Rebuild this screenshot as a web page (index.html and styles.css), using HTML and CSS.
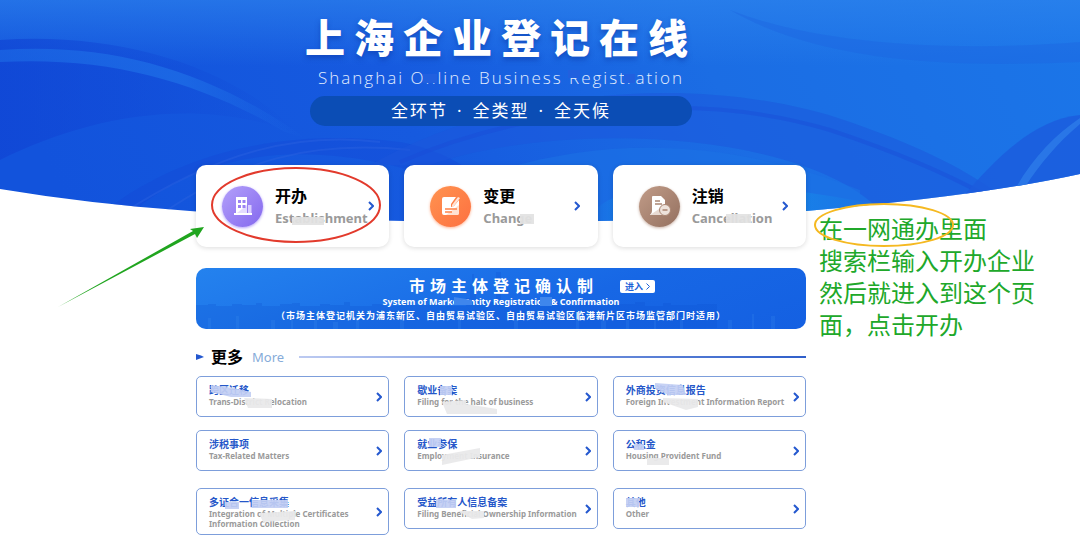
FILE: index.html
```html
<!DOCTYPE html>
<html lang="zh-CN">
<head>
    <meta charset="UTF-8">
    <meta name="viewport" content="width=device-width, initial-scale=1.0">
    <title>上海企业登记在线</title>
    <link rel="stylesheet" href="styles.css">
</head>
<body>
    <svg class="hero-bg" viewBox="0 0 1080 221" preserveAspectRatio="none" aria-hidden="true">
        <defs>
            <linearGradient id="sky" x1="0" y1="0.3" x2="1" y2="0.2">
                <stop offset="0" stop-color="#1253dc"/>
                <stop offset="0.35" stop-color="#165adf"/>
                <stop offset="0.65" stop-color="#1b6de4"/>
                <stop offset="1" stop-color="#1b75e8"/>
            </linearGradient>
            <linearGradient id="top" x1="0" y1="0" x2="0" y2="1">
                <stop offset="0" stop-color="#2f86ee" stop-opacity="0.6"/>
                <stop offset="0.3" stop-color="#2f86ee" stop-opacity="0"/>
            </linearGradient>
            <linearGradient id="dark" x1="0" y1="0" x2="1" y2="0">
                <stop offset="0" stop-color="#1044d4" stop-opacity="0.7"/>
                <stop offset="1" stop-color="#1044d4" stop-opacity="0"/>
            </linearGradient>
            <linearGradient id="band" x1="0" y1="0" x2="1" y2="0">
                <stop offset="0" stop-color="#1d6ce6" stop-opacity="0.6"/>
                <stop offset="0.6" stop-color="#1d6ce6" stop-opacity="0.8"/>
                <stop offset="1" stop-color="#1d6ce6" stop-opacity="0"/>
            </linearGradient>
            <linearGradient id="cyan" x1="0" y1="0" x2="1" y2="0">
                <stop offset="0" stop-color="#12a0ee" stop-opacity="0"/>
                <stop offset="0.3" stop-color="#12a0ee" stop-opacity="0.8"/>
                <stop offset="1" stop-color="#12a0ee" stop-opacity="0"/>
            </linearGradient>
            <clipPath id="wave">
                <path d="M0 0H1080V174Q980 196 806 211Q700 220 598 221H405Q300 220 190 211Q90 204 0 189Z"/>
            </clipPath>
        </defs>
        <g clip-path="url(#wave)">
            <rect width="1080" height="221" fill="url(#sky)"/>
            <rect width="1080" height="221" fill="url(#top)"/>
            <path d="M0 40C110 32 230 62 300 135C200 95 90 115 0 160Z" fill="url(#dark)"/>
            <path d="M0 50C110 42 210 70 305 138L285 132C200 82 110 56 0 62Z" fill="url(#band)"/>
            <path d="M100 215C180 150 290 128 400 142C440 150 470 165 490 190L390 165C280 140 190 160 130 215Z" fill="#1549d6" opacity="0.4"/>
            <path d="M120 215C220 150 300 132 380 142M160 215C240 160 310 140 410 150" fill="none" stroke="#2e63e2" stroke-width="2" opacity="0.4"/>
            <path d="M370 165C500 90 700 70 850 122C910 143 960 165 1000 195L880 210C800 130 560 120 430 165Z" fill="#1b55dc" opacity="0.5"/>
            <path d="M400 162C520 110 690 88 830 130C890 150 940 170 985 195" fill="none" stroke="#1a4cd8" stroke-width="4" opacity="0.4"/>
            <path d="M500 170C600 140 720 135 860 190L860 221H590Z" fill="#1c74e6" opacity="0.5"/>
            <path d="M590 221C595 190 680 165 880 205L800 221Z" fill="url(#cyan)"/>
            <path d="M730 10C820 45 950 52 1080 42V62C950 68 820 62 730 10Z" fill="#1c62e0" opacity="0.35"/>
            <path d="M960 200C990 165 1030 120 1080 115V190Z" fill="#1c5bdd" opacity="0.8"/>
            <path d="M1012 195C1030 160 1055 135 1080 118V124C1055 145 1035 170 1020 195Z" fill="#2f80ea" opacity="0.7"/>
        </g>
    </svg>

    <div class="page">
        <main>
            <header class="hero">
                <h1>上海企业登记在线</h1>
                <p class="hero-en">Shanghai Online Business Registration</p>
                <p class="hero-tags"><span>全环节</span><span>·</span><span>全类型</span><span>·</span><span>全天候</span></p>
            </header>

            <nav class="cards">
                <a class="card" href="#establishment">
                    <span class="badge purple">
                        <svg width="26" height="26" viewBox="0 0 26 26">
                            <path d="M6 4h11v16H6z" fill="#fff"/>
                            <path d="M18 12h3.500v8H18z" fill="#d9cdff"/>
                            <path d="M4 20h18v2H4z" fill="#fff"/>
                            <path d="M17 12v8H7z" fill="#d9cdff" opacity="0.7"/>
                            <path d="M8 7h3v3H8zM12.500 7h3v3h-3zM8 12h3v3H8zM12.500 12h3v3h-3z" fill="#9b82f3"/>
                        </svg>
                    </span>
                    <span class="card-text"><strong>开办</strong><span>Establishment</span></span>
                    <svg class="chevron" width="6" height="10" viewBox="0 0 6 10"><path d="M1 1l4 4-4 4"/></svg>
                </a>
                <a class="card" href="#change">
                    <span class="badge orange">
                        <svg width="26" height="26" viewBox="0 0 26 26">
                            <path d="M6 4h12l-5 7v3l3-1 5-6v13q0 2-2 2H6q-2 0-2-2V6q0-2 2-2z" fill="#fff"/>
                            <path d="M21 12v8q0 2-2 2H8z" fill="#ffd9c6" opacity="0.8"/>
                            <path d="M14 12l6-8 2 1-6 8-2 1z" fill="#ffe3d5"/>
                            <path d="M7 16h12M7 19h7" stroke="#ff8248" stroke-width="1.400"/>
                        </svg>
                    </span>
                    <span class="card-text"><strong>变更</strong><span>Change</span></span>
                    <svg class="chevron" width="6" height="10" viewBox="0 0 6 10"><path d="M1 1l4 4-4 4"/></svg>
                </a>
                <a class="card" href="#cancellation">
                    <span class="badge brown">
                        <svg width="26" height="26" viewBox="0 0 26 26">
                            <path d="M7 3h8l4 4v13q0 2-2 2H4q2-2 2-4V4q0-1 1-1z" fill="#fff"/>
                            <path d="M4 22l9-6 2 6z" fill="#e8dad2"/>
                            <path d="M9 8h5M9 11h7" stroke="#ab8673" stroke-width="1.300"/>
                            <circle cx="19" cy="17" r="5.500" fill="#eee3dc" stroke="#ab8673"/>
                            <path d="M16.500 17h5" stroke="#ab8673" stroke-width="1.500"/>
                        </svg>
                    </span>
                    <span class="card-text"><strong>注销</strong><span>Cancellation</span></span>
                    <svg class="chevron" width="6" height="10" viewBox="0 0 6 10"><path d="M1 1l4 4-4 4"/></svg>
                </a>
            </nav>

            <section class="banner">
                <svg class="skyline" viewBox="0 0 610 61" preserveAspectRatio="none" aria-hidden="true">
                    <path d="M0 61V37h12v-1h8v2h16v-2h10v1h14v-2h6v3h18v-2h12v-1h8v3h20v-2h10v1h14v-3h6v4h22v-2h12v2h16v-3h8v2h20v-1h14v2h24v-8h4v-14h2V6h2v12h2v16h20V4h5v32h18v-2h8v3h24v-2h8v3h20v-3h12v3h16v-4h8v2h20v-2h10v4h18v-3h8v2h26v-1h20v24z" fill="#0d50cf" opacity="0.25"/>
                    <path d="M12 61V50h3v11M40 61V48h3v13M75 61V52h4v9M95 61V45h2v16M118 61V50h3v11M137 61V54h5v7M160 61V46h3v15M204 61V52h4v9M262 61V50h3v11M318 61V52h4v9M380 61V48h3v13M405 61V53h5v8M430 61V52h3v9M458 61V47h2v14M484 61V49h3v12M532 61V52h4v9M556 61V46h2v15M575 61V48h4v13" fill="#4c9af5" opacity="0.16"/>
                </svg>
                <div class="banner-title">
                    <h2>市场主体登记确认制</h2>
                    <button type="button">进入<svg width="4" height="7" viewBox="0 0 4 7"><path d="M0.500 0.500l3 3-3 3"/></svg></button>
                </div>
                <p class="banner-en">System of Market Entity Registration &amp; Confirmation</p>
                <p class="banner-note">（市场主体登记机关为浦东新区、自由贸易试验区、自由贸易试验区临港新片区市场监管部门时适用）</p>
            </section>

            <div class="more">
                <svg width="8" height="6" viewBox="0 0 8 6"><path d="M0 0l5 1.500L8 3 0 6z"/></svg>
                <h2>更多</h2>
                <span>More</span>
                <i></i>
            </div>

            <nav class="links">
                <a href="#"><span><strong>跨区迁移</strong><small>Trans-District Relocation</small></span><svg class="chevron" width="6" height="10" viewBox="0 0 6 10"><path d="M1 1l4 4-4 4"/></svg></a>
                <a href="#"><span><strong>歇业备案</strong><small>Filing for the halt of business</small></span><svg class="chevron" width="6" height="10" viewBox="0 0 6 10"><path d="M1 1l4 4-4 4"/></svg></a>
                <a href="#"><span><strong>外商投资信息报告</strong><small>Foreign Investment Information Report</small></span><svg class="chevron" width="6" height="10" viewBox="0 0 6 10"><path d="M1 1l4 4-4 4"/></svg></a>
                <a href="#"><span><strong>涉税事项</strong><small>Tax-Related Matters</small></span><svg class="chevron" width="6" height="10" viewBox="0 0 6 10"><path d="M1 1l4 4-4 4"/></svg></a>
                <a href="#"><span><strong>就业参保</strong><small>Employment Insurance</small></span><svg class="chevron" width="6" height="10" viewBox="0 0 6 10"><path d="M1 1l4 4-4 4"/></svg></a>
                <a href="#"><span><strong>公积金</strong><small>Housing Provident Fund</small></span><svg class="chevron" width="6" height="10" viewBox="0 0 6 10"><path d="M1 1l4 4-4 4"/></svg></a>
                <a href="#"><span><strong>多证合一信息采集</strong><small>Integration of Multiple Certificates<br>Information Collection</small></span><svg class="chevron" width="6" height="10" viewBox="0 0 6 10"><path d="M1 1l4 4-4 4"/></svg></a>
                <a href="#"><span><strong>受益所有人信息备案</strong><small>Filing Beneficial Ownership Information</small></span><svg class="chevron" width="6" height="10" viewBox="0 0 6 10"><path d="M1 1l4 4-4 4"/></svg></a>
                <a href="#"><span><strong>其他</strong><small>Other</small></span><svg class="chevron" width="6" height="10" viewBox="0 0 6 10"><path d="M1 1l4 4-4 4"/></svg></a>
            </nav>
        </main>

        <aside class="tip">在一网通办里面<br>搜索栏输入开办企业然后就进入到这个页面，点击开办</aside>
    </div>

    <!-- hand drawn marks and smudges on top of the page -->
    <svg class="marks" viewBox="0 0 1080 550" preserveAspectRatio="none" aria-hidden="true">
        <g fill="#2160df">
            <path d="M423 74h14v9h-14zM568 70h12v8h-12zM624 74h11v9h-11z"/>
        </g>
        <path d="M454 297l18 3v5h-18zM540 297h12v9h-12z" fill="#3f86ec"/>
        <g fill="#e2e2e2" opacity="0.94">
            <path d="M292 217h32v8h-32zM520 214h14v10h-14zM726 214h25v9h-25z"/>
        </g>
        <g fill="#c3cff4" opacity="0.92">
            <path d="M211 385l22 3 18 4v5h-20l-20-5zM440 386h12v9h-12zM655 383l28 2 3 10h-18l-13-7zM429 438h12v9h-12zM634 444h10v6h-10z"/>
            <path d="M225 502h14v7h-14zM252 500h36v8h-36zM436 499l20 1v8h-20zM626 498h13v9h-13z"/>
        </g>
        <g fill="#e9e9ea" opacity="0.95">
            <path d="M244 398l28 1v9h-24zM442 402l24-2v4l31 5v5h-50zM663 398l35 1v8l-12 3-23-8zM442 455l38-7v9l-38 8zM647 458h22v7h-22z"/>
            <path d="M259 513l36-2v9l-32 2zM458 511h26v7l-12 1z"/>
        </g>
        <ellipse cx="296" cy="205" rx="84" ry="37" fill="none" stroke="#e23a2c" stroke-width="2"/>
        <ellipse cx="884" cy="225" rx="69" ry="21" fill="none" stroke="#f5b921" stroke-width="2"/>
        <path d="M58 307L193 231l-3-2 14-2-7 11-2-4z" fill="#20a51f"/>
    </svg>
</body>
</html>
```
FILE: styles.css
```css
* {
    box-sizing: border-box;
}

body {
    font-family: "Noto Sans", "Noto Sans CJK SC", sans-serif;
    background-color: #fff;
    margin: 0;
    position: relative;
}

h1, h2, p {
    margin: 0;
}

a {
    color: inherit;
    text-decoration: none;
}

.hero-bg {
    position: absolute;
    top: 0;
    left: 0;
    width: 100%;
    height: 221px;
}

.page {
    position: relative;
    display: grid;
    grid-template-columns: 196fr 610fr 274fr;
}

main {
    grid-column: 2;
    min-width: 0;
}

.hero {
    display: flex;
    flex-direction: column;
    align-items: center;
    padding-top: 10px;
    color: #fff;
    white-space: nowrap;
}

h1 {
    font-size: 40px;
    line-height: 56px;
    font-weight: 900;
    letter-spacing: 9px;
    text-shadow: 0 3px 5px rgba(10, 50, 160, 0.5);
}

.hero-en {
    font-family: "Open Sans", sans-serif;
    font-size: 17px;
    line-height: 24px;
    font-weight: 300;
    letter-spacing: 2px;
    color: #e2edfe;
}

.hero-tags {
    display: flex;
    justify-content: center;
    gap: 9px;
    width: 382px;
    margin-top: 6px;
    border-radius: 15px;
    background-color: #0b4db5;
    font-size: 17px;
    line-height: 30px;
    letter-spacing: 2px;
}

.cards {
    display: grid;
    grid-template-columns: repeat(3, 1fr);
    gap: 15px;
    margin-top: 39px;
}

.card {
    display: flex;
    align-items: center;
    gap: 12px;
    min-width: 0;
    height: 82px;
    padding: 0 18px 0 26px;
    border-radius: 10px;
    background-color: #fff;
    box-shadow: 0 1px 5px rgba(0, 0, 0, 0.14);
}

.badge {
    display: flex;
    align-items: center;
    justify-content: center;
    flex: none;
    width: 41px;
    height: 41px;
    border-radius: 50%;
}

.purple {
    background: linear-gradient(135deg, #b3a0fa, #8468ee);
    box-shadow: 0 1px 3px #b3a0fa;
}

.orange {
    background: linear-gradient(135deg, #ff9350, #fd7040);
    box-shadow: 0 1px 3px #ffb595;
}

.brown {
    background: linear-gradient(135deg, #c19c88, #94705f);
    box-shadow: 0 1px 3px #ccb4a8;
}

.card-text {
    flex: 1 0 auto;
    display: flex;
    flex-direction: column;
    padding-top: 2px;
    line-height: 22px;
}

.card-text strong {
    color: #000;
    font-size: 16px;
}

.card-text span {
    color: #9a9a9a;
    font-size: 13px;
    font-weight: 700;
}

.chevron {
    flex: none;
    fill: none;
    stroke: #2458cf;
    stroke-width: 2;
}

.card .chevron {
    margin-left: -12px;
}

.banner {
    position: relative;
    margin-top: 21px;
    padding: 9px 0 5px;
    border-radius: 10px;
    overflow: hidden;
    background: linear-gradient(160deg, #2482ee, #1767e5 60%, #1460e2);
    color: #fff;
    text-align: center;
    white-space: nowrap;
}

.skyline {
    position: absolute;
    top: 0;
    left: 0;
    width: 100%;
    height: 100%;
}

.banner-title, .banner-en, .banner-note {
    position: relative;
}

.banner-title {
    display: flex;
    align-items: center;
    justify-content: center;
    gap: 22px;
    padding-left: 62px;
}

.banner-title h2 {
    font-size: 16px;
    line-height: 19px;
    letter-spacing: 5px;
}

.banner button {
    display: flex;
    align-items: center;
    gap: 3px;
    height: 13px;
    padding: 0 5px;
    border: none;
    border-radius: 2px;
    background-color: #fff;
    color: #1d63d8;
    font-family: inherit;
    font-size: 9px;
    font-weight: 700;
    line-height: 13px;
}

.banner button svg {
    fill: none;
    stroke: #1d63d8;
}

.banner-en {
    font-size: 9px;
    line-height: 12px;
    font-weight: 700;
}

.banner-note {
    font-size: 9px;
    line-height: 16px;
    font-weight: 700;
    letter-spacing: 1px;
}

.more {
    display: flex;
    align-items: center;
    margin-top: 16px;
    line-height: 24px;
}

.more svg {
    fill: #2458cf;
}

.more h2 {
    margin: 0 9px 0 7px;
    font-size: 16px;
    color: #000;
}

.more span {
    color: #86abd9;
    font-size: 13px;
}

.more i {
    flex: 1;
    height: 2px;
    margin-left: 15px;
    background: linear-gradient(90deg, #bccaf1, #2f5fca);
}

.links {
    display: grid;
    grid-template-columns: repeat(3, 1fr);
    grid-template-rows: 42px 46px auto;
    gap: 12px 15px;
    align-items: start;
    margin-top: 7px;
}

.links a {
    display: flex;
    align-items: center;
    justify-content: space-between;
    min-width: 0;
    min-height: 41px;
    padding: 6px 6px 5px 12px;
    border: 1px solid #7d9edb;
    border-radius: 5px;
    white-space: nowrap;
}

.links a > span {
    align-self: flex-start;
}

.links strong {
    display: block;
    color: #2557c9;
    font-size: 10px;
    line-height: 14px;
}

.links small {
    display: block;
    color: #9a9a9a;
    font-size: 8px;
    font-weight: 700;
    line-height: 10px;
}

.tip {
    max-width: 230px;
    margin: 213px 0 0 13px;
    color: #20a82a;
    font-size: 24px;
    line-height: 32px;
}

.marks {
    position: absolute;
    top: 0;
    left: 0;
    width: 100%;
    height: 550px;
    pointer-events: none;
}
```
